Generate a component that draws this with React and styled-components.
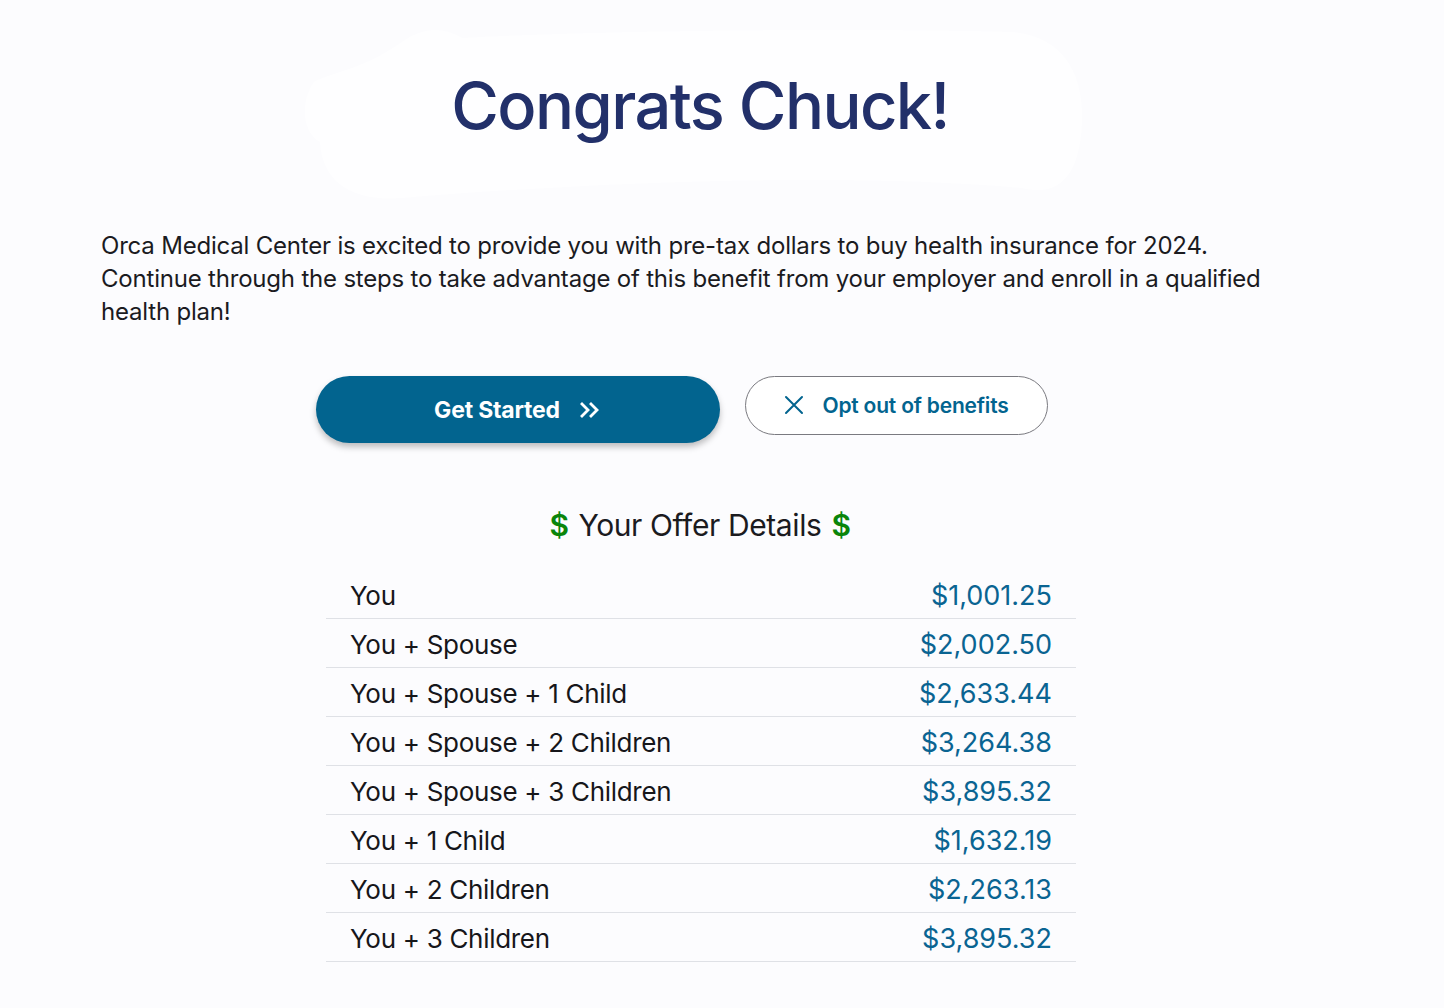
import React from "react";
import styled, { createGlobalStyle } from "styled-components";

const Global = createGlobalStyle`
  html, body { margin: 0; padding: 0; background: #fcfcfe; }
  body { font-family: "Inter", "Noto Sans", sans-serif; color: #1b1b1f; }
  * { box-sizing: border-box; }
`;

const Page = styled.main`
  width: 1400px;
  min-height: 1008px;
  padding: 0 0 40px 0;
  display: flex;
  flex-direction: column;
  align-items: center;
`;

const Hero = styled.section`
  position: relative;
  width: 100%;
  height: 229px;
  display: flex;
  justify-content: center;
  align-items: flex-start;
  padding-top: 66px;
`;

const Blob = styled.svg`
  position: absolute;
  left: 292px;
  top: 22px;
  width: 800px;
  height: 182px;
  pointer-events: none;
`;

const Title = styled.h1`
  position: relative;
  margin: 0;
  font-size: 65px;
  font-weight: 500;
  line-height: 80px;
  color: #22306a;
  letter-spacing: -1.6px;
`;

const Intro = styled.p`
  width: 1198px;
  margin: 0;
  align-self: flex-start;
  margin-left: 101px;
  font-size: 24px;
  line-height: 33px;
  letter-spacing: -0.2px;
  color: #1b1b1f;
`;

const Actions = styled.div`
  display: flex;
  align-items: flex-start;
  gap: 25px;
  margin-top: 48px;
  margin-left: -36px;
`;

const PrimaryButton = styled.button`
  width: 404px;
  height: 67px;
  border: none;
  border-radius: 34px;
  background: #02648f;
  color: #fff;
  font-family: inherit;
  font-size: 23px;
  font-weight: 700;
  letter-spacing: -0.2px;
  display: flex;
  align-items: center;
  justify-content: center;
  gap: 20px;
  padding-left: 4px;
  box-shadow: 0 4px 6px rgba(0, 0, 0, 0.25);
  cursor: pointer;
`;

const OutlineButton = styled.button`
  width: 303px;
  height: 59px;
  border: 1px solid #7a7a80;
  border-radius: 30px;
  background: #fff;
  color: #02648f;
  font-family: inherit;
  font-size: 21px;
  font-weight: 600;
  letter-spacing: -0.2px;
  display: flex;
  align-items: center;
  justify-content: center;
  gap: 18px;
  padding-bottom: 2px;
  cursor: pointer;
`;

const OfferTitle = styled.h2`
  margin: 62px 0 0 0;
  font-size: 30px;
  font-weight: 400;
  line-height: 40px;
  color: #1b1b1f;
  letter-spacing: -0.4px;
  display: flex;
  align-items: center;
  gap: 10px;
`;

const Dollar = styled.span`
  color: #0a850a;
  font-weight: 600;
  font-size: 30px;
`;

const Table = styled.div`
  width: 750px;
  margin-top: 25px;
  margin-left: 2px;
  display: flex;
  flex-direction: column;
`;

const Row = styled.div`
  height: 49px;
  padding: 2px 24px 0;
  display: flex;
  align-items: center;
  justify-content: space-between;
  border-bottom: 1px solid #dfe1e6;
  font-size: 26px;
  letter-spacing: -0.3px;
`;

const Label = styled.span`
  color: #16161a;
`;

const Amount = styled.span`
  color: #0a6492;
  font-size: 27px;
  letter-spacing: 0;
`;

const rows = [
  ["You", "$1,001.25"],
  ["You + Spouse", "$2,002.50"],
  ["You + Spouse + 1 Child", "$2,633.44"],
  ["You + Spouse + 2 Children", "$3,264.38"],
  ["You + Spouse + 3 Children", "$3,895.32"],
  ["You + 1 Child", "$1,632.19"],
  ["You + 2 Children", "$2,263.13"],
  ["You + 3 Children", "$3,895.32"],
];

export default function App() {
  return (
    <>
      <Global />
      <Page>
        <Hero>
          <Blob viewBox="0 0 800 182" aria-hidden="true">
            <path
              d="M110 20 C 130 6, 150 4, 170 16 C 320 8, 560 6, 720 10 C 770 14, 792 50, 790 100 C 788 150, 770 176, 730 166 C 560 150, 300 160, 110 176 C 60 180, 30 160, 28 120 C 10 110, 8 80, 22 60 C 40 50, 70 48, 110 20 Z"
              fill="#fefeff"
            />
          </Blob>
          <Title>Congrats Chuck!</Title>
        </Hero>
        <Intro>
          Orca Medical Center is excited to provide you with pre-tax dollars to buy health insurance for 2024.
          Continue through the steps to take advantage of this benefit from your employer and enroll in a qualified
          health plan!
        </Intro>
        <Actions>
          <PrimaryButton>
            Get Started
            <svg width="20" height="16" viewBox="0 0 20 16" fill="none" stroke="currentColor" strokeWidth="2.8" strokeLinecap="square" strokeLinejoin="miter">
              <path d="M2 2l6 6-6 6" />
              <path d="M11 2l6 6-6 6" />
            </svg>
          </PrimaryButton>
          <OutlineButton>
            <svg width="20" height="20" viewBox="0 0 20 20" fill="none" stroke="currentColor" strokeWidth="2" strokeLinecap="round">
              <path d="M2 2l16 16M18 2L2 18" />
            </svg>
            Opt out of benefits
          </OutlineButton>
        </Actions>
        <OfferTitle>
          <Dollar>$</Dollar>
          Your Offer Details
          <Dollar>$</Dollar>
        </OfferTitle>
        <Table>
          {rows.map(([l, a]) => (
            <Row key={l}>
              <Label>{l}</Label>
              <Amount>{a}</Amount>
            </Row>
          ))}
        </Table>
      </Page>
    </>
  );
}
